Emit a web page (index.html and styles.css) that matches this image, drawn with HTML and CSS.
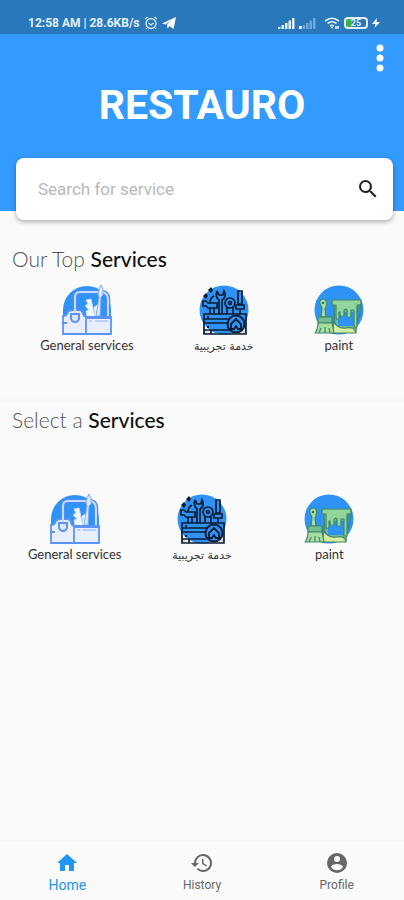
FILE: index.html
```html
<!DOCTYPE html>
<html lang="en">
<head>
    <meta charset="UTF-8">
    <meta name="viewport" content="width=device-width, initial-scale=1.0">
    <title>Restauro</title>
    <link rel="stylesheet" href="styles.css">
</head>
<body>
    <!-- Service drawings, used in both lists -->
    <svg class="sprite" aria-hidden="true">
        <symbol id="toolbox" viewBox="0 0 50 50">
            <path d="M1 49V25a24 24 0 0 1 48 0v24z" fill="#2e93f5"/>
            <path d="M13 31V12q0-5 5-5h21q7 0 7 8v16" fill="none" stroke="#4d8bf5" stroke-width="4.500"/>
            <path d="M13 31V12q0-5 5-5h21q7 0 7 8v16" fill="none" stroke="#c5dcff" stroke-width="2"/>
            <path d="M25 32l-1-6 3-1-4-4 3-2-2-4 5-1 4 18z" fill="#f3f7ff" stroke="#c5dcff"/>
            <path d="M33 31l-1-9 3-2 3 3-1 8z" fill="#f3f7ff"/>
            <path d="M39 0q3 4 2 10l-2 2-1 19h-4l3-19-1-3q1-6 3-9z" fill="#dfeaff" stroke="#7babf9"/>
            <path d="M1 49V31q4 0 5-4 1-2 5-2h5q5 0 5 4 1 3 4 3h24v17z" fill="#e8eeff" stroke="#5b93f7" stroke-width="1.800"/>
            <path d="M24 32v17M25 33h24M0 38h5" fill="none" stroke="#5b93f7" stroke-width="1.800"/>
            <path d="M13 30V19" stroke="#c5dcff" stroke-width="2"/>
            <path d="M9 29h8v5q-1 3-4 3t-4-3z" fill="#dce8ff" stroke="#5b93f7" stroke-width="2"/>
            <path d="M27 36h3M33 36h13" stroke="#a6c5fc" stroke-width="1.500"/>
        </symbol>
        <symbol id="tools" viewBox="0 0 50 50">
            <circle cx="25" cy="25" r="24.500" fill="#2e93f5"/>
            <path d="M4 40v9h6zM47 40v9h-7z" fill="#d8d8d8"/>
            <g fill="none" stroke="#0b1c33" stroke-width="1.700">
                <path d="M5 29h42v20H5zM5 34h27M5 38h24M5 45h26M12 49v-4"/>
                <path d="M4 16h3l2 2h9v5H9l-2-2H4zM11 23v6M15 23v6M11 18q0-5 4-7"/>
                <path d="M18 6q-2 6 2 9v14M23 29V15q5-3 2-9l-1 4h-4l-2-4"/>
                <circle cx="31" cy="18" r="5"/>
                <circle cx="31" cy="18" r="1.500"/>
                <path d="M28 22v7M34 22v7M39 6h4v13h-4zM37 20h8v4h-8zM41 24v5"/>
            </g>
            <path d="M7 8l2 3-2 3-3-3zM12 2l2 3-2 3-3-3z" fill="#0b1c33"/>
            <circle cx="37" cy="39" r="8.500" fill="#2e93f5" stroke="#0b1c33" stroke-width="2"/>
            <path d="M32 39l5-5 5 5v5h-3l-2-3-2 3h-3z" fill="none" stroke="#0b1c33" stroke-width="1.800"/>
            <path d="M8 32h2M8 42h2" stroke="#0b1c33" stroke-width="2"/>
        </symbol>
        <symbol id="paint" viewBox="0 0 50 50">
            <circle cx="25" cy="25" r="24.500" fill="#2e93f5"/>
            <g stroke="#3f8668" stroke-width="1.200" stroke-linejoin="round">
                <path d="M20 19h24l-2 28H21z" fill="#6fbd98"/>
                <path d="M24 27h17v14H24z" fill="#2e93f5" stroke="none"/>
                <path d="M18 15h29v5h-4v22h-3V25h-3v6q-2 3-4 0v-6q-2-2-3 1v4q-2 3-4 0v-3h-1v6q-2 3-3 0V20h-4z" fill="#91d59a"/>
                <path d="M46 19q2 6-2 16" fill="none"/>
                <path d="M20 37q4 7 12 6 9-2 10 5H18z" fill="#d5ed9b"/>
                <path d="M7 32l1-9q-5-8 1-9 5 0 3 8l-1 2 1 8z" fill="#a8dda0"/>
                <path d="M4 32h14v6H4z" fill="#73bd91"/>
                <path d="M4 38h14l2 10H1q3-4 3-10z" fill="#a8dda0"/>
                <path d="M7 43l-2 5M11 42v6M15 43l1 5" fill="none"/>
            </g>
            <circle cx="9" cy="18" r="1.200" fill="#2b6d63"/>
        </symbol>
    </svg>

    <div class="status-bar">
        <div class="status-group">
            <span>12:58 AM | 28.6KB/s</span>
            <svg class="status-icon" viewBox="0 0 14 14" fill="none" stroke="#d7e9f9" stroke-width="1.300">
                <circle cx="7" cy="7.500" r="5"/>
                <path d="M1 3l2.500-2M13 3l-2.500-2M4.500 7L7 9l2.500-2M3 12l-1 1M11 12l1 1"/>
            </svg>
            <svg class="status-icon" viewBox="0 0 14 14" fill="#fff">
                <path d="M0 7.500L14 1l-2.500 12-4-3-2 2.500-.5-4L10 4 3.500 8.500z"/>
            </svg>
        </div>
        <div class="status-group">
            <svg class="signal" viewBox="0 0 17 12" fill="#e3f0fb">
                <path d="M0 10h2.500v2H0zM3.500 8H6v4H3.500zM7 6h2.500v6H7zM10.500 3.500H13V12h-2.500zM14 1h2.500v11H14z"/>
            </svg>
            <svg class="signal" viewBox="0 0 17 12" fill="#6fa9db">
                <path d="M0 9h3v3H0z" fill="#fff"/>
                <path d="M4 8h2v4H4zM7 6h2.500v6H7zM10.500 3.500H13V12h-2.500zM14 1h2.500v11H14z"/>
            </svg>
            <svg class="wifi" viewBox="0 0 16 12" fill="none" stroke="#e3f0fb" stroke-width="1.600">
                <path d="M1 4q7-5.500 14 0M3.500 6.500q4.500-3.500 9 0M6 9q2-1.500 4 0"/>
                <path d="M7 10.500h2M12 9v3M14 9v3"/>
            </svg>
            <div class="battery"><span>25</span></div>
            <svg class="bolt" viewBox="0 0 8 12" fill="#fff">
                <path d="M5 1L0 7h3.500L2.500 11 8 5H4.500z"/>
            </svg>
        </div>
    </div>

    <header class="header">
        <button class="menu-button" type="button" aria-label="Menu">
            <svg viewBox="0 0 8 28" fill="#fff">
                <circle cx="4" cy="4" r="3.500"/>
                <circle cx="4" cy="14" r="3.500"/>
                <circle cx="4" cy="24" r="3.500"/>
            </svg>
        </button>
        <h1>RESTAURO</h1>
    </header>

    <form class="search">
        <input type="text" placeholder="Search for service" aria-label="Search for service">
        <button type="submit" aria-label="Search">
            <svg viewBox="0 0 24 24" fill="#222">
                <path d="M15.500 14h-.79l-.28-.27A6.470 6.470 0 0 0 16 9.500 6.500 6.500 0 1 0 9.500 16c1.610 0 3.090-.59 4.230-1.570l.27.28v.79l5 4.990L20.490 19zm-6 0a4.500 4.500 0 1 1 0-9 4.500 4.500 0 0 1 0 9z"/>
            </svg>
        </button>
    </form>

    <main>
        <section class="top-services">
            <h2>Our Top <b>Services</b></h2>
            <div class="service-row">
                <button class="service" type="button">
                    <svg><use href="#toolbox"/></svg>
                    <span>General services</span>
                </button>
                <button class="service" type="button">
                    <svg><use href="#tools"/></svg>
                    <span class="arabic" lang="ar" dir="rtl">خدمة تجريبية</span>
                </button>
                <button class="service" type="button">
                    <svg><use href="#paint"/></svg>
                    <span>paint</span>
                </button>
            </div>
        </section>

        <section class="all-services">
            <h2>Select a <b>Services</b></h2>
            <div class="service-grid">
                <button class="service" type="button">
                    <svg><use href="#toolbox"/></svg>
                    <span>General services</span>
                </button>
                <button class="service" type="button">
                    <svg><use href="#tools"/></svg>
                    <span class="arabic" lang="ar" dir="rtl">خدمة تجريبية</span>
                </button>
                <button class="service" type="button">
                    <svg><use href="#paint"/></svg>
                    <span>paint</span>
                </button>
            </div>
        </section>
    </main>

    <nav class="bottom-nav">
        <a class="active" href="#home">
            <svg viewBox="0 0 24 24"><path d="M10 20v-6h4v6h5v-8h3L12 3 2 12h3v8z"/></svg>
            <span>Home</span>
        </a>
        <a href="#history">
            <svg viewBox="0 0 24 24"><path d="M13 3a9 9 0 0 0-9 9H1l3.890 3.890.07.140L9 12H6a7 7 0 1 1 2.060 4.940l-1.420 1.420A9 9 0 1 0 13 3zm-1 5v5l4.280 2.540.72-1.210-3.500-2.080V8z"/></svg>
            <span>History</span>
        </a>
        <a href="#profile">
            <svg viewBox="0 0 24 24"><path d="M12 2a10 10 0 1 0 0 20 10 10 0 0 0 0-20zm0 3a3 3 0 1 1 0 6 3 3 0 0 1 0-6zm0 14.200a7.200 7.200 0 0 1-6-3.220c.03-1.990 4-3.080 6-3.080s5.970 1.090 6 3.080a7.200 7.200 0 0 1-6 3.220z"/></svg>
            <span>Profile</span>
        </a>
    </nav>
</body>
</html>
```
FILE: styles.css
```css
* {
    box-sizing: border-box;
}
body {
    margin: 0;
    min-height: 100vh;
    display: flex;
    flex-direction: column;
    background: #fafafa;
    font-family: Roboto, sans-serif;
}
button {
    padding: 0;
    border: none;
    background: none;
    cursor: pointer;
}
svg {
    display: block;
}
.sprite {
    position: absolute;
    width: 0;
    height: 0;
}

/* Status bar */
.status-bar {
    display: flex;
    justify-content: space-between;
    height: 34px;
    padding: 12px 24px 0 28px;
    background: #2878bb;
    color: #e3f0fb;
    font-size: 12px;
    font-weight: 700;
    line-height: 22px;
}
.status-group {
    display: flex;
    align-items: center;
    gap: 4px;
}
.status-icon {
    width: 14px;
    height: 14px;
}
.signal {
    width: 17px;
    height: 12px;
}
.wifi {
    width: 16px;
    height: 12px;
    margin-left: 4px;
}
.battery {
    width: 24px;
    height: 12px;
    border: 2px solid #e3f0fb;
    border-radius: 4px;
    background: linear-gradient(to right, #3fae49 6px, #2878bb 6px);
    font-size: 9px;
    line-height: 8px;
    text-align: center;
}
.bolt {
    width: 8px;
    height: 12px;
}

/* Header */
.header {
    height: 177px;
    padding: 10px 20px 0;
    background: #339afe;
}
.menu-button {
    display: block;
    margin-left: auto;
}
.menu-button svg {
    width: 8px;
    height: 28px;
}
h1 {
    margin: 8px 0 0;
    color: #fff;
    font-size: 41px;
    font-weight: 700;
    line-height: 50px;
    text-align: center;
}

/* Search */
.search {
    display: flex;
    align-items: center;
    height: 62px;
    margin: -53px 11px 0 16px;
    padding: 0 13px 0 22px;
    border-radius: 8px;
    background: #fff;
    box-shadow: 0 2px 5px rgba(0, 0, 0, 0.3);
}
.search input {
    flex: 1;
    min-width: 0;
    padding: 0;
    border: none;
    outline: none;
    background: none;
    font-family: inherit;
    font-size: 17px;
}
.search input::placeholder {
    color: #b8b8b8;
}
.search svg {
    width: 24px;
    height: 24px;
}

/* Services */
main {
    flex: 1;
}
h2 {
    margin: 0;
    padding: 0 12px;
    color: #555;
    font-family: Lato, sans-serif;
    font-size: 21px;
    font-weight: 300;
    line-height: 26px;
}
h2 b {
    color: #111;
    font-weight: 500;
}
.top-services {
    height: 183px;
    padding-top: 26px;
    border-bottom: 7px solid #f7f7f7;
}
.all-services {
    padding-top: 4px;
}
.service-row {
    display: flex;
    justify-content: space-around;
    padding: 13px 10px 0;
}
.service-grid {
    display: grid;
    grid-template-columns: repeat(3, 1fr);
    padding: 61px 11px 0;
}
.service {
    display: flex;
    flex-direction: column;
    align-items: center;
    color: #333;
    font-family: Lato, sans-serif;
    font-size: 13px;
    font-weight: 400;
    line-height: 20px;
}
.service svg {
    width: 50px;
    height: 50px;
}
.arabic {
    padding-top: 2px;
    font-family: "DejaVu Sans", sans-serif;
    font-size: 11px;
}

/* Bottom navigation */
.bottom-nav {
    display: flex;
    height: 60px;
    border-top: 2px solid #f5f5f5;
}
.bottom-nav a {
    flex: 1;
    display: flex;
    flex-direction: column;
    align-items: center;
    padding-top: 9px;
    color: #666;
    font-size: 12px;
    line-height: 20px;
    text-decoration: none;
}
.bottom-nav svg {
    width: 24px;
    height: 24px;
    fill: currentColor;
}
.bottom-nav .active {
    color: #2196f3;
    font-size: 14px;
}
```
